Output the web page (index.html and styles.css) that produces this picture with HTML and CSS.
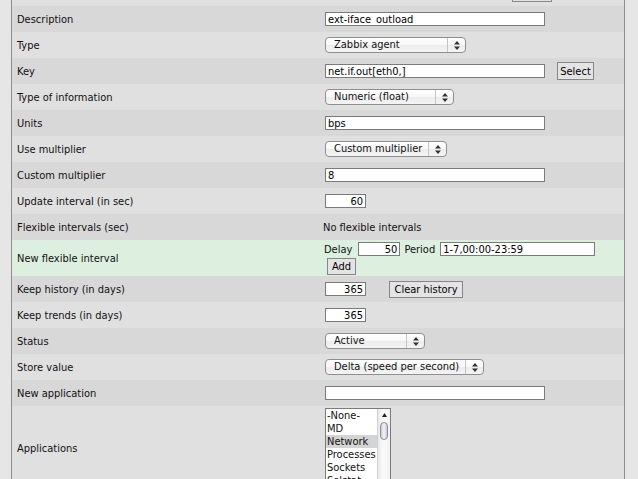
FILE: index.html
```html
<!DOCTYPE html>
<html>
<head>
<meta charset="utf-8">
<link rel="stylesheet" href="styles.css">
</head>
<body>
<div class="frame">
  <div class="row light top"><span class="btn-stub"></span></div>

  <div class="row dark">
    <div class="lbl">Description</div>
    <div class="val"><input class="inp w220" value="ext-iface_outload"></div>
  </div>

  <div class="row light">
    <div class="lbl">Type</div>
    <div class="val">
      <div class="sel s-type"><span class="st">Zabbix agent</span><span class="arr"><svg width="6" height="9" viewBox="0 0 6 9"><path d="M3 0L6 3.5H0Z M3 9L6 5.5H0Z" fill="#333"/></svg></span></div>
    </div>
  </div>

  <div class="row dark">
    <div class="lbl">Key</div>
    <div class="val"><input class="inp w220" value="net.if.out[eth0,]"><button class="btn b-select">Select</button></div>
  </div>

  <div class="row light">
    <div class="lbl">Type of information</div>
    <div class="val">
      <div class="sel s-info"><span class="st">Numeric (float)</span><span class="arr"><svg width="6" height="9" viewBox="0 0 6 9"><path d="M3 0L6 3.5H0Z M3 9L6 5.5H0Z" fill="#333"/></svg></span></div>
    </div>
  </div>

  <div class="row dark">
    <div class="lbl">Units</div>
    <div class="val"><input class="inp w220" value="bps"></div>
  </div>

  <div class="row light">
    <div class="lbl">Use multiplier</div>
    <div class="val">
      <div class="sel s-mult"><span class="st">Custom multiplier</span><span class="arr"><svg width="6" height="9" viewBox="0 0 6 9"><path d="M3 0L6 3.5H0Z M3 9L6 5.5H0Z" fill="#333"/></svg></span></div>
    </div>
  </div>

  <div class="row dark">
    <div class="lbl">Custom multiplier</div>
    <div class="val"><input class="inp w220" value="8"></div>
  </div>

  <div class="row light">
    <div class="lbl">Update interval (in sec)</div>
    <div class="val"><input class="inp w41 num" value="60"></div>
  </div>

  <div class="row dark">
    <div class="lbl">Flexible intervals (sec)</div>
    <div class="val"><span class="txt">No flexible intervals</span></div>
  </div>

  <div class="row green">
    <div class="lbl">New flexible interval</div>
    <div class="val flex-col">
      <div class="line">
        <span class="txt">Delay</span>
        <input class="inp w42 num delay" value="50">
        <span class="txt period">Period</span>
        <input class="inp w155 per" value="1-7,00:00-23:59">
      </div>
      <button class="btn b-add">Add</button>
    </div>
  </div>

  <div class="row dark">
    <div class="lbl">Keep history (in days)</div>
    <div class="val"><input class="inp w41 num" value="365"><button class="btn b-clear">Clear history</button></div>
  </div>

  <div class="row light">
    <div class="lbl">Keep trends (in days)</div>
    <div class="val"><input class="inp w41 num" value="365"></div>
  </div>

  <div class="row dark">
    <div class="lbl">Status</div>
    <div class="val">
      <div class="sel s-status"><span class="st">Active</span><span class="arr"><svg width="6" height="9" viewBox="0 0 6 9"><path d="M3 0L6 3.5H0Z M3 9L6 5.5H0Z" fill="#333"/></svg></span></div>
    </div>
  </div>

  <div class="row light">
    <div class="lbl">Store value</div>
    <div class="val">
      <div class="sel s-store"><span class="st">Delta (speed per second)</span><span class="arr"><svg width="6" height="9" viewBox="0 0 6 9"><path d="M3 0L6 3.5H0Z M3 9L6 5.5H0Z" fill="#333"/></svg></span></div>
    </div>
  </div>

  <div class="row dark">
    <div class="lbl">New application</div>
    <div class="val"><input class="inp w220" value=""></div>
  </div>

  <div class="row light apps">
    <div class="lbl">Applications</div>
    <div class="val">
      <div class="listbox">
        <div class="items">
          <div class="it">-None-</div>
          <div class="it">MD</div>
          <div class="it hl">Network</div>
          <div class="it">Processes</div>
          <div class="it">Sockets</div>
          <div class="it">Solstat</div>
        </div>
        <div class="sb">
          <svg class="up" width="5" height="4" viewBox="0 0 5 4"><path d="M2.5 0L5 4H0Z" fill="#222"/></svg>
          <div class="thumb"></div>
          <svg class="down" width="5" height="4" viewBox="0 0 5 4"><path d="M2.5 4L5 0H0Z" fill="#222"/></svg>
        </div>
      </div>
    </div>
  </div>
</div>
</body>
</html>
```

FILE: styles.css
```css
html, body {
  margin: 0;
  padding: 0;
  height: 479px;
  overflow: hidden;
  background: #e6e6e6;
}

body {
  font-family: "DejaVu Sans Condensed", "DejaVu Sans", sans-serif;
  font-size: 11px;
  color: #111;
}

.frame {
  margin-left: 11px;
  width: 612px;
  border-left: 1px solid #8d8d8d;
  border-right: 1px solid #8d8d8d;
  height: 479px;
  overflow: hidden;
}

.row {
  display: flex;
  align-items: center;
  height: 26px;
}

.row.light { background: #e0e0e0; }
.row.dark { background: #d8d8d8; }
.row.green { background: #ddefdf; height: 36px; }

.row.top {
  height: 6px;
  align-items: flex-start;
}

.btn-stub {
  display: block;
  margin-left: 500px;
  width: 38px;
  height: 1px;
  border: 1px solid #8a8a8a;
  border-top: none;
  background: #e2e2e2;
}

.lbl {
  width: 309px;
  box-sizing: border-box;
  padding-left: 5px;
  flex: none;
}

.val {
  display: flex;
  align-items: center;
  padding-left: 2px;
}

.txt {
  white-space: nowrap;
}

.inp {
  box-sizing: border-box;
  height: 14px;
  margin: 0 0 0 2px;
  padding: 0 2px;
  border: 1px solid #7b7b7b;
  background: #fff;
  font-family: inherit;
  font-size: 11px;
  color: #000;
  outline: none;
}

.w220 { width: 220px; }
.w41 { width: 41px; }
.w42 { width: 42px; }
.w155 { width: 155px; }
.num { text-align: right; }

.btn {
  box-sizing: border-box;
  height: 18px;
  padding: 0 4px;
  border: 1px solid #858585;
  background: #e4e4e4;
  font-family: inherit;
  font-size: 11px;
  color: #000;
}

.b-select { margin-left: 12px; width: 37px; height: 18px; padding: 0; }
.b-clear { margin-left: 23px; width: 74px; height: 17px; padding: 0; }
.b-add { margin-left: 4px; margin-top: 1px; width: 29px; height: 17px; padding: 0; }

.flex-col {
  flex-direction: column;
  align-items: flex-start;
  align-self: stretch;
  padding-top: 1px;
}

.line {
  display: flex;
  align-items: center;
  height: 16px;
}

.line .txt:first-child { margin-left: 1px; }
.delay { margin-left: 6px; }
.period { margin-left: 4px; }
.per { margin-left: 5px; }

.sel {
  box-sizing: border-box;
  display: flex;
  align-items: stretch;
  height: 16px;
  margin-left: 2px;
  border: 1px solid #8f8f8f;
  border-radius: 4px;
  background: linear-gradient(#ffffff, #f7f7f7 50%, #ececec 51%, #f4f4f4);
}

.st {
  flex: 1;
  padding-left: 8px;
  line-height: 14px;
  white-space: nowrap;
}

.arr {
  width: 17px;
  border-left: 1px solid #c4c4c4;
  display: flex;
  align-items: center;
  justify-content: center;
}

.s-type { width: 141px; }
.s-info { width: 129px; }
.s-mult { width: 122px; }
.s-status { width: 100px; }
.s-store { width: 159px; }

.apps {
  height: 84px;
  align-items: flex-start;
}
.apps .lbl { align-self: center; }
.apps .val { padding-top: 2px; }

.listbox {
  margin-left: 2px;
  width: 66px;
  height: 80px;
  box-sizing: border-box;
  border: 1px solid #7b7b7b;
  background: #fff;
  display: flex;
}

.items {
  flex: 1;
  min-width: 0;
  font-family: "DejaVu Sans Condensed", "DejaVu Sans", sans-serif;
  font-size: 11px;
}

.it {
  height: 13px;
  line-height: 13px;
  padding-left: 1px;
  white-space: nowrap;
}

.it.hl { background: #d4d4d4; }

.sb {
  width: 13px;
  flex: none;
  background: linear-gradient(90deg, #e9e9e9, #fafafa 40%, #f2f2f2);
  border-left: 1px solid #d0d0d0;
  box-sizing: border-box;
  display: flex;
  flex-direction: column;
  align-items: center;
}

.sb .up { margin-top: 4px; }

.thumb {
  margin-top: 5px;
  width: 8px;
  height: 18px;
  box-sizing: border-box;
  border: 1px solid #8a8fa0;
  border-radius: 4px;
  background: linear-gradient(90deg, #c9ccd6, #f4f5f8 50%, #c6c9d3);
}

.sb .down { margin-top: auto; margin-bottom: 3px; }
```
